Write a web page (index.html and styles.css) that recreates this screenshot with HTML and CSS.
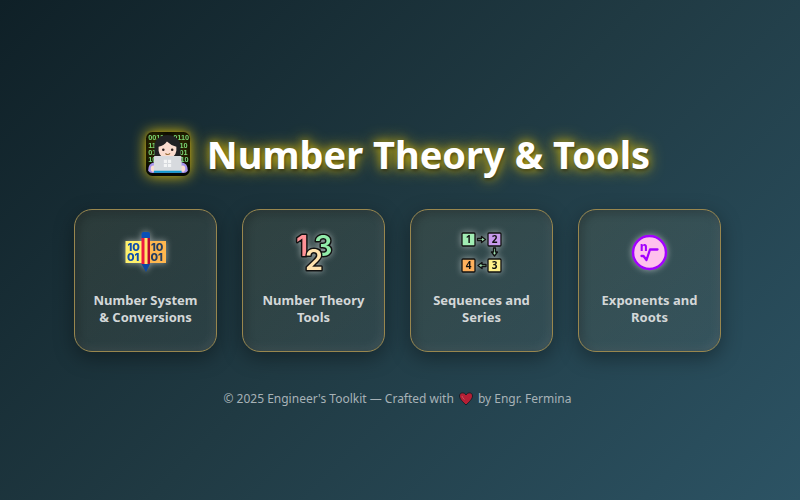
FILE: index.html
```html
<!DOCTYPE html>
<html lang="en">
<head>
<meta charset="utf-8">
<meta name="viewport" content="width=device-width, initial-scale=1">
<title>Number Theory &amp; Tools</title>
<link rel="stylesheet" href="styles.css">
</head>
<body>
<main class="page">
  <h1 class="title">
    <svg class="title-icon" viewBox="0 0 44 44" aria-hidden="true">
      <rect x="1" y="1" width="42" height="42" rx="6" fill="#050807"/>
      <g class="binary">
        <text x="3" y="9">0011</text><text x="27" y="9">0110</text>
        <text x="3" y="16">110</text><text x="33" y="16">10</text>
        <text x="3" y="23">01</text><text x="33" y="23">01</text>
        <text x="3" y="30">10</text><text x="34" y="30">10</text>
      </g>
      <path d="M9 27V15C9 0 34 0 34 15V27Z" fill="#202124"/>
      <path d="M3 38Q3 31 9 30H35Q41 31 41 38Q39 41 35 40H9Q5 41 3 38Z" fill="#a794ed"/>
      <path d="M13 15Q18 14 21 10Q25 14 30 15V19Q29 26 21.500 26Q14 26 13 19Z" fill="#fadccf"/>
      <circle cx="17.500" cy="18" r="1.200" fill="#251c1c"/><circle cx="26" cy="18" r="1.200" fill="#251c1c"/>
      <path d="M19.500 21.500Q22 23.500 24 21.500" fill="none" stroke="#9b6e38"/>
      <ellipse cx="8" cy="36" rx="2.500" ry="3" fill="#fadccf"/><ellipse cx="36" cy="36" rx="2.500" ry="3" fill="#fadccf"/>
      <rect x="8.500" y="24" width="26.500" height="15" rx="1" fill="#d7dade"/>
      <path d="M18 27.500h3v3h-3zM22 27.500h3v3h-3zM18 31.500h3v3h-3zM22 31.500h3v3h-3z" fill="#f4f5f6"/>
      <rect x="8.500" y="38" width="26.500" height="2" fill="#129bd0"/>
    </svg>
    <span>Number Theory &amp; Tools</span>
  </h1>
  <nav class="cards" aria-label="Tools">
    <a class="card" href="#conversions">
      <svg class="card-icon" viewBox="0 0 44 44" aria-hidden="true">
        <rect x="1.500" y="10" width="17.500" height="22" fill="#fff06c"/>
        <rect x="24" y="10" width="18" height="22" fill="#ffb74f"/>
        <g class="bits bits-left"><text x="3.500" y="19.500">10</text><text x="3" y="30">01</text></g>
        <g class="bits bits-right"><text x="27" y="19.500">10</text><text x="26.500" y="30">01</text></g>
        <path d="M17.500 33H26L22 41Z" fill="#0d47a1"/>
        <rect x="17.500" y="6" width="8.500" height="27" fill="#ef1840"/>
        <rect x="23.500" y="6" width="2.500" height="27" fill="#b9082f"/>
        <rect x="20.500" y="6" width="3" height="27" fill="#ffe36b"/>
        <path d="M17.500 3Q17.500 1 19.500 1H24Q26 1 26 3V7H17.500Z" fill="#0b50b6"/>
      </svg>
      <span>Number System &amp; Conversions</span>
    </a>
    <a class="card" href="#theory">
      <svg class="card-icon" viewBox="0 0 44 44" aria-hidden="true">
        <g class="numerals">
          <text class="pink" x="4" y="25">1</text>
          <text class="green" x="22" y="25">3</text>
          <text class="cream" x="13" y="39">2</text>
        </g>
      </svg>
      <span>Number Theory Tools</span>
    </a>
    <a class="card" href="#sequences">
      <svg class="card-icon" viewBox="0 0 44 44" aria-hidden="true">
        <g stroke="#111" stroke-width="1.300">
          <rect x="2" y="2" width="13" height="13" rx="1" fill="#a1edb4"/>
          <rect x="28" y="2" width="13" height="13" rx="1" fill="#c99aed"/>
          <rect x="2" y="28" width="13" height="13" rx="1" fill="#ffb15d"/>
          <rect x="28" y="28" width="13" height="13" rx="1" fill="#fff08a"/>
        </g>
        <g fill="#9bdcad" stroke="#111" stroke-width="1.300" stroke-linejoin="round">
          <path d="M17.500 7.500h4v-2l4 3-4 3v-2h-4z"/>
          <path d="M33.500 17v4h-2l3 4 3-4h-2v-4z"/>
          <path d="M26 33.500h-4v-2l-4 3 4 3v-2h4z"/>
        </g>
        <g class="steps"><text x="8.500" y="12">1</text><text x="34.500" y="12">2</text><text x="34.500" y="38">3</text><text x="8.500" y="38">4</text></g>
      </svg>
      <span>Sequences and Series</span>
    </a>
    <a class="card" href="#exponents">
      <svg class="card-icon" viewBox="0 0 44 44" aria-hidden="true">
        <circle cx="21.500" cy="21.500" r="16.500" fill="#ffc0ed" stroke="#a300ff" stroke-width="2.500"/>
        <text class="root-index" x="12" y="20">n</text>
        <path d="M13.500 25H15.500L18.500 29L22 18.500H29.500" fill="none" stroke="#a300ff" stroke-width="2.300" stroke-linecap="round" stroke-linejoin="round"/>
      </svg>
      <span>Exponents and Roots</span>
    </a>
  </nav>
  <footer class="footer">
    <span>© 2025 Engineer's Toolkit — Crafted with</span>
    <svg class="heart" viewBox="0 0 16 16" role="img" aria-label="love">
      <path d="M8 14C5 11 1.500 8 1.500 5C1.500 1 6.500 1 8 4C9.500 1 14.500 1 14.500 5C14.500 8 11 11 8 14Z" fill="#b51f35" stroke="#152129" stroke-width="1"/>
      <path d="M4 5Q4.500 7 6.500 8.500" fill="none" stroke="#c9505a"/>
    </svg>
    <span>by Engr. Fermina</span>
  </footer>
</main>
</body>
</html>
```
FILE: styles.css
```css
* {
  box-sizing: border-box;
}

body {
  margin: 0;
  min-height: 100vh;
  background: linear-gradient(135deg, #0f2027, #203a43, #2c5364);
  font-family: "Noto Sans", "Open Sans", sans-serif;
  color: #fff;
}

.page {
  min-height: 100vh;
  padding: 35px 30px 0 25px;
  display: flex;
  flex-direction: column;
  align-items: center;
  justify-content: center;
}

.title {
  margin: 0 0 29px;
  display: flex;
  align-items: center;
  gap: 16px;
  font-size: 38px;
  line-height: 52px;
  font-weight: 700;
  white-space: nowrap;
  text-shadow: 1px 2px 3px rgba(0, 0, 0, 0.4), 0 0 8px rgba(255, 215, 0, 0.5), 0 0 16px rgba(255, 215, 0, 0.8);
}

.title-icon {
  width: 46px;
  height: 46px;
  filter: drop-shadow(0 0 7px rgba(255, 215, 0, 0.9));
}

.binary {
  font: 700 7px "Liberation Sans", sans-serif;
  fill: #75d77d;
}

.cards {
  width: 100%;
  max-width: 647px;
  display: grid;
  grid-template-columns: repeat(4, 1fr);
  gap: 25px;
}

.card {
  aspect-ratio: 1;
  padding: 0 16px 4px;
  display: flex;
  flex-direction: column;
  align-items: center;
  justify-content: center;
  gap: 17px;
  border: 1px solid #98864e;
  border-radius: 18px;
  background: linear-gradient(145deg, rgba(255, 215, 120, 0.09), rgba(255, 225, 170, 0.06));
  box-shadow: 0 6px 20px rgba(0, 0, 0, 0.35), inset 2px 2px 10px rgba(0, 0, 0, 0.3), inset -2px -2px 10px rgba(255, 255, 255, 0.1);
  color: #d3d7d8;
  font-size: 13px;
  line-height: 17px;
  font-weight: 700;
  text-align: center;
  text-decoration: none;
}

.card-icon {
  width: 44px;
  height: 44px;
  overflow: visible;
  filter: drop-shadow(0 0 3px rgba(255, 255, 255, 0.5));
}

.bits {
  font: 800 11px Inter, sans-serif;
}

.bits-left {
  fill: #0d4eae;
}

.bits-right {
  fill: #253e62;
}

.numerals {
  font: 600 29px Inter, sans-serif;
  stroke: #111;
  stroke-width: 3;
  stroke-linejoin: round;
  paint-order: stroke;
}

.pink {
  fill: #ff9297;
}

.green {
  fill: #91ebaa;
}

.cream {
  fill: #ffe3ae;
}

.steps {
  font: 700 10px "Noto Sans", sans-serif;
  text-anchor: middle;
  fill: #111;
}

.root-index {
  font: 800 12px Inter, sans-serif;
  fill: #a300ff;
}

.footer {
  margin-top: 38px;
  display: flex;
  align-items: center;
  gap: 4px;
  color: #a7b2b7;
  font-size: 12px;
  line-height: 18px;
}

.heart {
  width: 16px;
  height: 16px;
}
```
